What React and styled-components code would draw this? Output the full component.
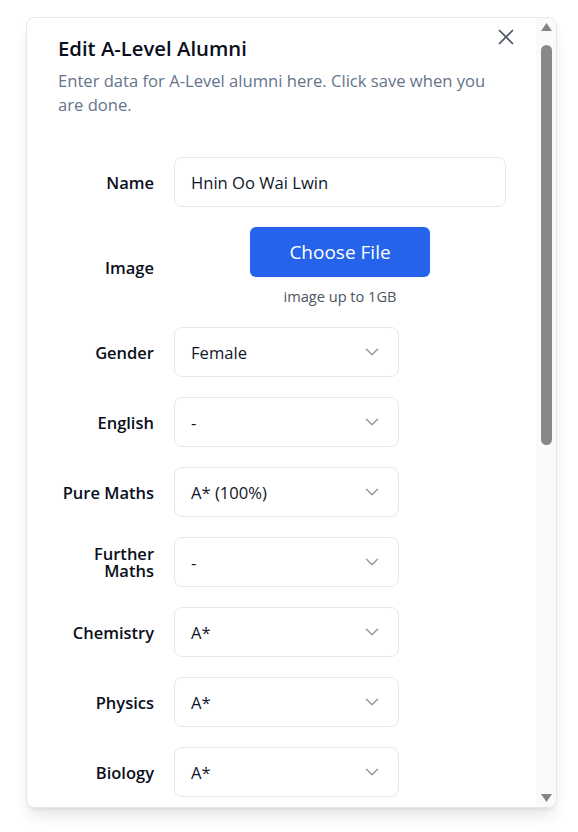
import React from 'react'
import styled, { createGlobalStyle } from 'styled-components'
import { X, ChevronDown } from 'lucide-react'

const GlobalStyle = createGlobalStyle`
  * { box-sizing: border-box; }
  body {
    margin: 0;
    background: #ffffff;
    font-family: "Open Sans", "Noto Sans", sans-serif;
    color: #0f172a;
  }
`

const rows = [
  { label: 'Gender', value: 'Female' },
  { label: 'English', value: '-' },
  { label: 'Pure Maths', value: 'A* (100%)' },
  { label: 'Further Maths', value: '-' },
  { label: 'Chemistry', value: 'A*' },
  { label: 'Physics', value: 'A*' },
  { label: 'Biology', value: 'A*' },
]

const App = () => {
  return (
    <Page>
      <GlobalStyle />
      <Dialog>
        <Body>
          <CloseButton type="button" aria-label="Close">
            <X size={26} strokeWidth={1.6} />
          </CloseButton>

          <Header>
            <Title>Edit A-Level Alumni</Title>
            <Description>
              Enter data for A-Level alumni here. Click save when you are done.
            </Description>
          </Header>

          <Form>
            <Row>
              <Label>Name</Label>
              <TextInput defaultValue="Hnin Oo Wai Lwin" />
            </Row>

            <Row>
              <Label>Image</Label>
              <UploadBox>
                <FileButton>
                  Choose File
                  <input type="file" hidden />
                </FileButton>
                <Hint>image up to 1GB</Hint>
              </UploadBox>
            </Row>

            {rows.map(row => (
              <Row key={row.label}>
                <Label>{row.label}</Label>
                <SelectTrigger type="button">
                  <span>{row.value}</span>
                  <Chevron size={22} strokeWidth={1.5} />
                </SelectTrigger>
              </Row>
            ))}
          </Form>
        </Body>

        <ScrollRail>
          <RailArrow viewBox="0 0 11 8">
            <polygon points="0,8 5.5,0 11,8" />
          </RailArrow>
          <RailTrack>
            <RailThumb />
          </RailTrack>
          <RailArrow viewBox="0 0 11 8">
            <polygon points="0,0 11,0 5.5,8" />
          </RailArrow>
        </ScrollRail>
      </Dialog>
    </Page>
  )
}

export default App

const Page = styled.div`
  padding: 17px 0 0 26px;
  height: 832px;
`

const Dialog = styled.div`
  position: relative;
  width: 531px;
  height: 791px;
  display: flex;
  background: #ffffff;
  border: 1px solid #e5e7eb;
  border-radius: 8px;
  overflow: hidden;
  box-shadow: 0 10px 15px -3px rgba(0, 0, 0, 0.1), 0 4px 6px -4px rgba(0, 0, 0, 0.1);
`

const Body = styled.div`
  position: relative;
  flex: 1;
  overflow-y: auto;
  scrollbar-width: none;
  padding: 16px 30px 32px 31px;
`

const ScrollRail = styled.div`
  width: 20px;
  display: flex;
  flex-direction: column;
  align-items: center;
  background: #fafafa;
`

const RailArrow = styled.svg`
  width: 11px;
  height: 8px;
  margin: 5px 0 5px 1px;
  fill: #858585;
`

const RailTrack = styled.div`
  flex: 1;
  width: 100%;
  padding: 9px 4px 0 5px;
`

const RailThumb = styled.div`
  height: 400px;
  border-radius: 6px;
  background: #888888;
`

const CloseButton = styled.button`
  position: absolute;
  top: 6px;
  right: 17px;
  width: 26px;
  height: 26px;
  padding: 0;
  border: none;
  background: transparent;
  color: #4b5563;
  display: grid;
  place-items: center;
  cursor: pointer;
`

const Header = styled.div`
  display: flex;
  flex-direction: column;
  gap: 7px;
`

const Title = styled.h2`
  margin: 0;
  font-size: 20.3px;
  line-height: 28px;
  font-weight: 600;
  color: #0a0f1c;
`

const Description = styled.p`
  margin: 0;
  font-size: 16.6px;
  line-height: 24px;
  color: #64748b;
`

const Form = styled.div`
  display: grid;
  gap: 20px;
  margin-top: 40px;
`

const Row = styled.div`
  display: grid;
  grid-template-columns: repeat(4, minmax(0, 1fr));
  column-gap: 16px;
  align-items: center;
`

const Label = styled.label`
  text-align: right;
  font-size: 16.5px;
  font-weight: 600;
  line-height: 17px;
  color: #0a0f1c;
  padding-right: 4px;
`

const TextInput = styled.input`
  grid-column: span 3;
  height: 50px;
  padding: 0 16px;
  border: 1px solid #e2e8f0;
  border-radius: 8px;
  font-family: inherit;
  font-size: 16.6px;
  color: #0f172a;
  background: #ffffff;
  outline: none;
`

const UploadBox = styled.div`
  grid-column: span 3;
  display: flex;
  flex-direction: column;
  align-items: center;
`

const FileButton = styled.label`
  width: 180px;
  height: 50px;
  display: grid;
  place-items: center;
  background: #2563eb;
  color: #ffffff;
  border-radius: 6px;
  font-size: 19px;
  cursor: pointer;
`

const Hint = styled.span`
  margin-top: 8px;
  font-size: 14.6px;
  line-height: 22px;
  color: #4b5563;
`

const SelectTrigger = styled.button`
  grid-column: span 3;
  justify-self: start;
  width: 225px;
  height: 50px;
  display: flex;
  align-items: center;
  justify-content: space-between;
  padding: 0 15px 0 16px;
  border: 1px solid #e2e8f0;
  border-radius: 8px;
  background: #ffffff;
  font-family: inherit;
  font-size: 16.6px;
  color: #0f172a;
  text-align: left;
  cursor: pointer;
`

const Chevron = styled(ChevronDown)`
  color: #0f172a;
  opacity: 0.45;
`
